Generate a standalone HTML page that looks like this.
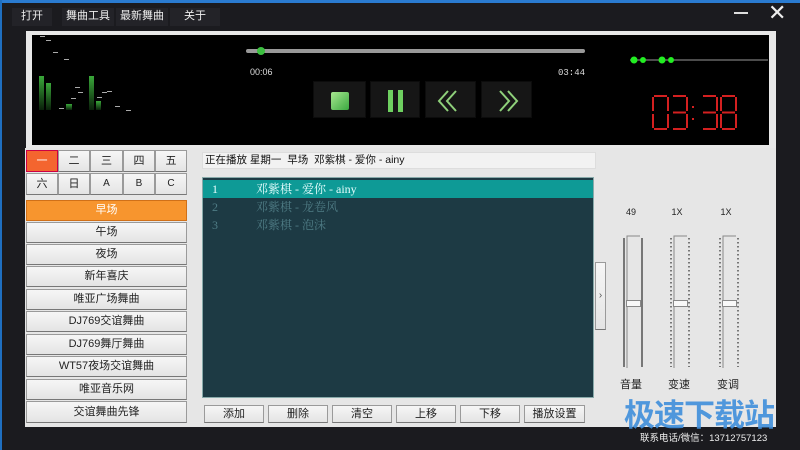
<!DOCTYPE html>
<html><head><meta charset="utf-8"><style>
*{margin:0;padding:0;box-sizing:border-box}
body{width:800px;height:450px;overflow:hidden;background:#1b1b1f;position:relative;font-family:"Liberation Sans","Noto Sans CJK SC",sans-serif;font-size:11px}
.a{position:absolute}
.menu{color:#eee;font-size:11px;top:8px;background:#232328;height:18px;line-height:16px;text-align:center}
.btn{position:absolute;background:linear-gradient(#f6f6f6,#e4e4e4);border:1px solid #9a9a9a;border-bottom-color:#777;text-align:center;color:#222;font-size:11px}
.cb{position:absolute;top:81px;height:37px;background:#161616;border:1px solid #0c0c0c}
.row{position:absolute;left:0;width:390px;height:18px;line-height:18px;font-size:12px;font-family:"Liberation Serif","Noto Serif CJK SC",serif}
.row span{position:absolute}
</style></head><body>
<div class="a" style="left:0;top:0;width:800px;height:3px;background:#2a7bd0"></div>
<div class="a" style="left:0;top:0;width:2px;height:450px;background:#1f6fc0"></div>
<div class="a menu" style="left:12px;width:40px">打开</div>
<div class="a menu" style="left:62px;width:52px">舞曲工具</div>
<div class="a menu" style="left:116px;width:52px">最新舞曲</div>
<div class="a menu" style="left:170px;width:50px">关于</div>
<div class="a" style="left:734px;top:12px;width:14px;height:2px;background:#ddd"></div>
<div class="a" style="left:768px;top:2px;color:#eee;font-size:22px;line-height:22px">✕</div>

<div class="a" style="left:26px;top:31px;width:750px;height:117px;background:#e8e8e8"></div>
<div class="a" style="left:32px;top:35px;width:737px;height:110px;background:#000"></div>
<svg class="a" style="left:0;top:0" width="800" height="150">
<defs><linearGradient id="g" x1="0" y1="0" x2="0" y2="1"><stop offset="0" stop-color="#3aa83a"/><stop offset="1" stop-color="#0a200a"/></linearGradient></defs>
<rect x="39" y="76" width="5" height="34" fill="url(#g)"/><rect x="46" y="83" width="5" height="27" fill="url(#g)"/>
<rect x="89" y="76" width="5" height="34" fill="url(#g)"/><rect x="96" y="101" width="5" height="9" fill="url(#g)"/>
<rect x="66" y="104" width="6" height="6" fill="url(#g)"/>
<g fill="#aaa"><rect x="40" y="36" width="5" height="1"/><rect x="46" y="40" width="5" height="1"/><rect x="53" y="52" width="5" height="1"/><rect x="64" y="59" width="5" height="1"/><rect x="75" y="87" width="5" height="1"/><rect x="71" y="98" width="5" height="1"/><rect x="59" y="108" width="5" height="1"/><rect x="78" y="92" width="5" height="1"/><rect x="102" y="92" width="5" height="1"/><rect x="107" y="91" width="5" height="1"/><rect x="97" y="97" width="5" height="1"/><rect x="115" y="106" width="5" height="1"/><rect x="126" y="110" width="5" height="1"/></g>
<rect x="246" y="49" width="339" height="4" rx="2" fill="#999"/>
<circle cx="261" cy="51" r="4" fill="#3cc040"/>
<text x="250" y="75" fill="#ddd" font-size="9" font-family="Liberation Sans">00:06</text>
<text x="558" y="75" fill="#ddd" font-size="9" font-family="Liberation Mono">03:44</text>
<line x1="630" y1="60" x2="768" y2="60" stroke="#999" stroke-width="1"/>
<g fill="#22ee22"><circle cx="634" cy="60" r="3.5"/><circle cx="643" cy="60" r="3"/><circle cx="662" cy="60" r="3.5"/><circle cx="671" cy="60" r="3"/></g>
</svg>
<div class="cb" style="left:313px;width:53px"><div class="a" style="left:17px;top:10px;width:18px;height:18px;border-radius:2px;background:linear-gradient(135deg,#a8e890,#3aa840)"></div></div>
<div class="cb" style="left:370px;width:50px"><div class="a" style="left:17px;top:8px;width:5px;height:22px;background:#6ed060"></div><div class="a" style="left:27px;top:8px;width:5px;height:22px;background:#6ed060"></div></div>
<div class="cb" style="left:425px;width:51px"><svg width="51" height="37"><polyline points="22,9 13,19 22,29" fill="none" stroke="#8ed07a" stroke-width="2"/><polyline points="30,9 21,19 30,29" fill="none" stroke="#8ed07a" stroke-width="2"/></svg></div>
<div class="cb" style="left:481px;width:51px"><svg width="51" height="37"><polyline points="18,9 27,19 18,29" fill="none" stroke="#8ed07a" stroke-width="2"/><polyline points="26,9 35,19 26,29" fill="none" stroke="#8ed07a" stroke-width="2"/></svg></div>
<svg class="a" style="left:650px;top:95px" width="95" height="37" fill="none" stroke="#d42020" stroke-width="2">
<g transform="translate(3,1)"><path d="M1 0H14M15 1V15M15 18V32M1 33H14M0 18V32M0 1V15"/></g>
<g transform="translate(22,1)"><path d="M1 0H14M15 1V15M15 18V32M1 33H14M1 16.5H14"/></g>
<g fill="#d42020" stroke="none"><rect x="42" y="11" width="2" height="2"/><rect x="42" y="23" width="2" height="2"/></g>
<g transform="translate(52,1)"><path d="M1 0H14M15 1V15M15 18V32M1 33H14M1 16.5H14"/></g>
<g transform="translate(71,1)"><path d="M1 0H14M15 1V15M15 18V32M1 33H14M0 18V32M0 1V15M1 16.5H14"/></g>
</svg>

<div class="a" style="left:25px;top:148px;width:751px;height:279px;background:#e6e6e6"></div>
<div class="btn" style="left:26px;top:150px;width:32px;height:22px;line-height:20px;background:#f4652f;border-color:#c04;color:#fff">一</div>
<div class="btn" style="left:58px;top:150px;width:32px;height:22px;line-height:20px">二</div>
<div class="btn" style="left:90px;top:150px;width:33px;height:22px;line-height:20px">三</div>
<div class="btn" style="left:123px;top:150px;width:32px;height:22px;line-height:20px">四</div>
<div class="btn" style="left:155px;top:150px;width:32px;height:22px;line-height:20px">五</div>
<div class="btn" style="left:26px;top:173px;width:32px;height:22px;line-height:20px">六</div>
<div class="btn" style="left:58px;top:173px;width:32px;height:22px;line-height:20px">日</div>
<div class="btn" style="left:90px;top:173px;width:33px;height:22px;line-height:20px;font-size:10px">A</div>
<div class="btn" style="left:123px;top:173px;width:32px;height:22px;line-height:20px;font-size:10px">B</div>
<div class="btn" style="left:155px;top:173px;width:32px;height:22px;line-height:20px;font-size:10px">C</div>
<div class="btn" style="left:26px;top:200px;width:161px;height:21px;line-height:19px;background:#f7952e;border-color:#d07018;color:#fff">早场</div>
<div class="btn" style="left:26px;top:222px;width:161px;height:21px;line-height:19px">午场</div>
<div class="btn" style="left:26px;top:244px;width:161px;height:21px;line-height:19px">夜场</div>
<div class="btn" style="left:26px;top:266px;width:161px;height:21px;line-height:19px">新年喜庆</div>
<div class="btn" style="left:26px;top:289px;width:161px;height:21px;line-height:19px">唯亚广场舞曲</div>
<div class="btn" style="left:26px;top:311px;width:161px;height:21px;line-height:19px">DJ769交谊舞曲</div>
<div class="btn" style="left:26px;top:334px;width:161px;height:21px;line-height:19px">DJ769舞厅舞曲</div>
<div class="btn" style="left:26px;top:356px;width:161px;height:21px;line-height:19px">WT57夜场交谊舞曲</div>
<div class="btn" style="left:26px;top:379px;width:161px;height:21px;line-height:19px">唯亚音乐网</div>
<div class="btn" style="left:26px;top:401px;width:161px;height:22px;line-height:20px">交谊舞曲先锋</div>

<div class="a" style="left:202px;top:152px;width:394px;height:17px;background:#f2f2f2;border:1px solid #ddd;font-size:10.5px;line-height:15px;padding-left:2px;color:#111;white-space:pre">正在播放 星期一  早场  邓紫棋 - 爱你 - ainy</div>
<div class="a" style="left:202px;top:177px;width:392px;height:221px;background:#1d3a44;border:1px solid #8aa">
<div class="row" style="top:2px;background:#0e9a96;color:#e8ffff"><span style="left:9px">1</span><span style="left:53px">邓紫棋 - 爱你 - ainy</span></div>
<div class="row" style="top:20px;color:#4f7c85"><span style="left:9px">2</span><span style="left:53px">邓紫棋 - 龙卷风</span></div>
<div class="row" style="top:38px;color:#4f7c85"><span style="left:9px">3</span><span style="left:53px">邓紫棋 - 泡沫</span></div>
</div>
<div class="btn" style="left:204px;top:405px;width:60px;height:18px;line-height:16px">添加</div>
<div class="btn" style="left:268px;top:405px;width:60px;height:18px;line-height:16px">删除</div>
<div class="btn" style="left:332px;top:405px;width:60px;height:18px;line-height:16px">清空</div>
<div class="btn" style="left:396px;top:405px;width:60px;height:18px;line-height:16px">上移</div>
<div class="btn" style="left:460px;top:405px;width:60px;height:18px;line-height:16px">下移</div>
<div class="btn" style="left:524px;top:405px;width:61px;height:18px;line-height:16px">播放设置</div>
<div class="btn" style="left:595px;top:262px;width:11px;height:68px;line-height:66px;font-size:10px;color:#555">›</div>

<div class="a" style="left:620px;top:207px;width:22px;text-align:center;font-size:9px;color:#222">49</div>
<div class="a" style="left:666px;top:207px;width:22px;text-align:center;font-size:9px;color:#222">1X</div>
<div class="a" style="left:715px;top:207px;width:22px;text-align:center;font-size:9px;color:#222">1X</div>
<svg class="a" style="left:600px;top:230px" width="160" height="140">
<g transform="translate(-600,0)">
<line x1="624" y1="8" x2="624" y2="137" stroke="#777" stroke-width="2"/><line x1="642" y1="8" x2="642" y2="137" stroke="#777" stroke-width="2"/>
<path d="M627 138V6H640" fill="none" stroke="#888" stroke-width="1"/>
<path d="M627 138V6H640" fill="none" stroke="#888" stroke-width="1" transform="translate(47,0)"/>
<path d="M627 138V6H640" fill="none" stroke="#888" stroke-width="1" transform="translate(96,0)"/>
<line x1="671" y1="8" x2="671" y2="137" stroke="#777" stroke-width="2" stroke-dasharray="1.5 2.5"/><line x1="689" y1="8" x2="689" y2="137" stroke="#777" stroke-width="2" stroke-dasharray="1.5 2.5"/>
<line x1="720" y1="8" x2="720" y2="137" stroke="#777" stroke-width="2" stroke-dasharray="1.5 2.5"/><line x1="738" y1="8" x2="738" y2="137" stroke="#777" stroke-width="2" stroke-dasharray="1.5 2.5"/>
<g fill="#f8f8f8" stroke="#888" stroke-width="1"><rect x="626.5" y="70.5" width="14" height="6"/><rect x="673.5" y="70.5" width="14" height="6"/><rect x="722.5" y="70.5" width="14" height="6"/></g>
</g></svg>
<div class="a" style="left:614px;top:376px;width:34px;text-align:center;font-size:11px;color:#222">音量</div>
<div class="a" style="left:662px;top:376px;width:34px;text-align:center;font-size:11px;color:#222">变速</div>
<div class="a" style="left:711px;top:376px;width:34px;text-align:center;font-size:11px;color:#222">变调</div>

<div class="a" style="left:624px;top:398px;font-size:31px;line-height:36px;font-weight:bold;color:#3f8fdc;opacity:.9;letter-spacing:-1px">极速下载站</div>
<div class="a" style="left:640px;top:430px;font-size:9.5px;color:#eee;white-space:nowrap">联系电话/微信：13712757123</div>
</body></html>
